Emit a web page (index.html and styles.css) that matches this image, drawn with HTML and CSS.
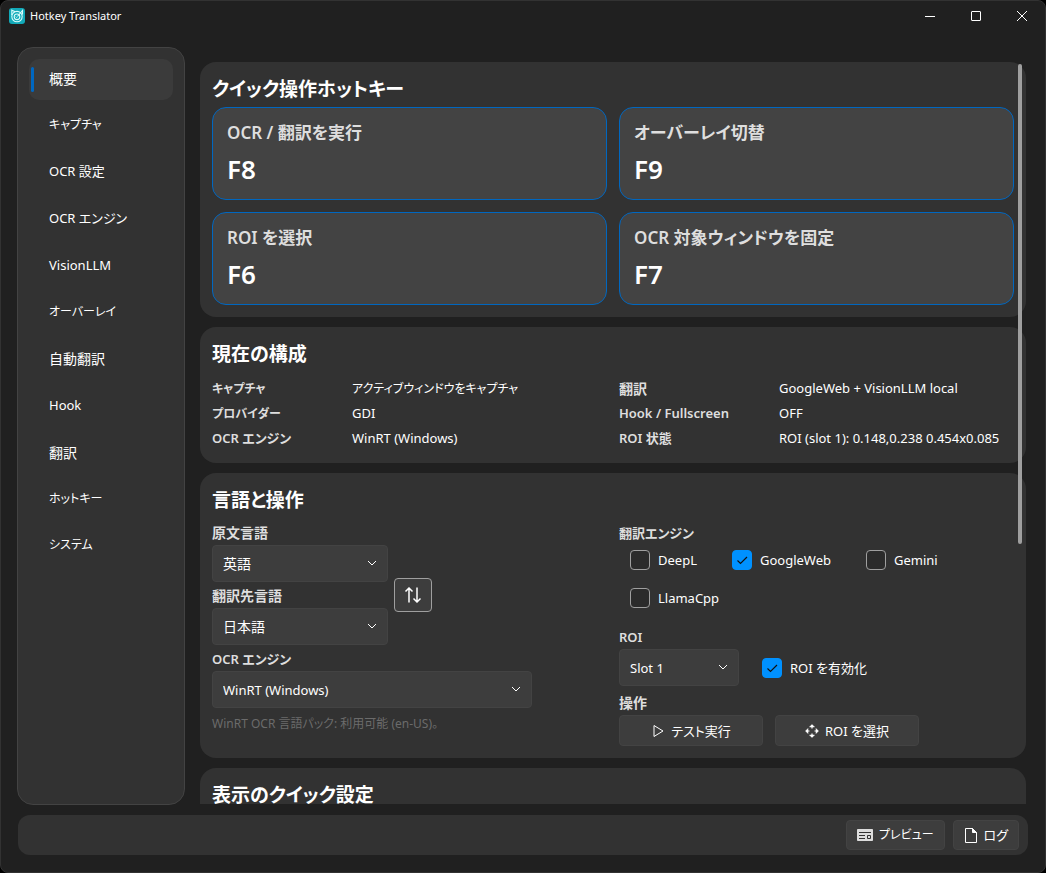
FILE: index.html
```
<!DOCTYPE html>
<html lang="ja">
<head>
    <meta charset="UTF-8">
    <meta name="viewport" content="width=device-width, initial-scale=1.0">
    <title>Hotkey Translator</title>
    <link rel="stylesheet" href="styles.css">
</head>
<body>
    <div class="window">
        <header class="titlebar">
            <svg class="app-icon" viewBox="0 0 16 16" aria-hidden="true">
                <rect width="16" height="16" rx="3" fill="#12a9b8"/>
                <g fill="none" stroke="#d8fbfb" stroke-width="1.1">
                    <circle cx="8" cy="8.6" r="5.2"/>
                    <circle cx="8" cy="8.8" r="2.8"/>
                    <path d="M2.800 7V2.200l3.400 1.600M8.500 8.500l5-6v4"/>
                    <path d="M6.800 8.600l1.200 1.200" stroke-width="1"/>
                </g>
            </svg>
            <span class="app-title">Hotkey Translator</span>
            <div class="window-buttons">
                <button type="button" aria-label="最小化"><svg viewBox="0 0 10 10"><path d="M0 5.5h10"/></svg></button>
                <button type="button" aria-label="最大化"><svg viewBox="0 0 10 10"><rect x="0.5" y="0.5" width="9" height="9" rx="0.5"/></svg></button>
                <button type="button" aria-label="閉じる"><svg viewBox="0 0 10 10"><path d="M0 0l10 10M10 0L0 10"/></svg></button>
            </div>
        </header>

        <div class="main">
            <nav class="sidebar">
                <a class="nav-item kanji active" href="#overview">概要</a>
                <a class="nav-item kana" href="#capture">キャプチャ</a>
                <a class="nav-item" href="#ocr">OCR 設定</a>
                <a class="nav-item" href="#engine">OCR エンジン</a>
                <a class="nav-item" href="#vision">VisionLLM</a>
                <a class="nav-item kana" href="#overlay">オーバーレイ</a>
                <a class="nav-item kanji" href="#auto">自動翻訳</a>
                <a class="nav-item" href="#hook">Hook</a>
                <a class="nav-item kanji" href="#translate">翻訳</a>
                <a class="nav-item kana" href="#hotkeys">ホットキー</a>
                <a class="nav-item kana" href="#system">システム</a>
            </nav>

            <div class="content">
                <div class="scroller">
                    <section class="panel">
                        <h2>クイック操作ホットキー</h2>
                        <div class="hotkeys">
                            <div class="hotkey"><h3>OCR / 翻訳を実行</h3><p>F8</p></div>
                            <div class="hotkey"><h3>オーバーレイ切替</h3><p>F9</p></div>
                            <div class="hotkey"><h3>ROI を選択</h3><p>F6</p></div>
                            <div class="hotkey"><h3>OCR 対象ウィンドウを固定</h3><p>F7</p></div>
                        </div>
                    </section>

                    <section class="panel">
                        <h2>現在の構成</h2>
                        <div class="columns status">
                            <dl>
                                <dt class="kana">キャプチャ</dt><dd class="kana">アクティブウィンドウをキャプチャ</dd>
                                <dt class="kana">プロバイダー</dt><dd>GDI</dd>
                                <dt>OCR エンジン</dt><dd>WinRT (Windows)</dd>
                            </dl>
                            <dl class="wide">
                                <dt class="kanji">翻訳</dt><dd>GoogleWeb + VisionLLM local</dd>
                                <dt>Hook / Fullscreen</dt><dd>OFF</dd>
                                <dt>ROI 状態</dt><dd>ROI (slot 1): 0.148,0.238 0.454x0.085</dd>
                            </dl>
                        </div>
                    </section>

                    <section class="panel">
                        <h2>言語と操作</h2>
                        <div class="columns controls">
                            <div class="column">
                                <div class="languages">
                                    <div class="language-fields">
                                        <div class="field">
                                            <label class="kanji" for="source">原文言語</label>
                                            <div class="select">
                                                <select class="kanji" id="source"><option>英語</option><option>日本語</option></select>
                                                <svg viewBox="0 0 10 6"><path d="M1 1l4 4 4-4"/></svg>
                                            </div>
                                        </div>
                                        <div class="field">
                                            <label class="kanji" for="target">翻訳先言語</label>
                                            <div class="select">
                                                <select class="kanji" id="target"><option>日本語</option><option>英語</option></select>
                                                <svg viewBox="0 0 10 6"><path d="M1 1l4 4 4-4"/></svg>
                                            </div>
                                        </div>
                                    </div>
                                    <button class="swap" type="button" aria-label="言語を入れ替え">
                                        <svg viewBox="0 0 18 16"><path d="M5 15.5V1M1.5 4.5L5 1l3.500 3.500M13 .5V15M9.500 11.500L13 15l3.500-3.500"/></svg>
                                    </button>
                                </div>
                                <div class="field engine">
                                    <label for="ocr-engine">OCR エンジン</label>
                                    <div class="select">
                                        <select id="ocr-engine"><option>WinRT (Windows)</option></select>
                                        <svg viewBox="0 0 10 6"><path d="M1 1l4 4 4-4"/></svg>
                                    </div>
                                </div>
                                <p class="hint">WinRT OCR 言語パック: 利用可能 (en-US)。</p>
                            </div>

                            <div class="column">
                                <fieldset>
                                    <legend>翻訳エンジン</legend>
                                    <div class="checks">
                                        <label class="check"><input type="checkbox">DeepL</label>
                                        <label class="check"><input type="checkbox" checked>GoogleWeb</label>
                                        <label class="check"><input type="checkbox">Gemini</label>
                                        <label class="check"><input type="checkbox">LlamaCpp</label>
                                    </div>
                                </fieldset>
                                <div class="field roi">
                                    <label for="slot">ROI</label>
                                    <div class="roi-row">
                                        <div class="select">
                                            <select id="slot"><option>Slot 1</option><option>Slot 2</option></select>
                                            <svg viewBox="0 0 10 6"><path d="M1 1l4 4 4-4"/></svg>
                                        </div>
                                        <label class="check"><input type="checkbox" checked>ROI を有効化</label>
                                    </div>
                                </div>
                                <div class="field actions">
                                    <span class="label kanji">操作</span>
                                    <div class="action-row">
                                        <button class="button" type="button">
                                            <svg viewBox="0 0 14 14"><path d="M3 1.500v11L12 7z"/></svg>テスト実行
                                        </button>
                                        <button class="button" type="button">
                                            <svg viewBox="0 0 14 14"><path d="M7 1v3.500M7 9.500V13M1 7h3.500M9.500 7H13" stroke-width="1.2"/><path d="M4.500 3L7 .5 9.500 3zM4.500 11L7 13.500 9.500 11zM3 4.500L.5 7 3 9.500zM11 4.500L13.500 7 11 9.500z" fill="#fff" stroke-width="0.5"/></svg>ROI を選択
                                        </button>
                                    </div>
                                </div>
                            </div>
                        </div>
                    </section>

                    <section class="panel">
                        <h2>表示のクイック設定</h2>
                    </section>
                </div>
                <div class="scroll-thumb"></div>
            </div>
        </div>

        <footer class="footer">
            <button class="button kana" type="button">
                <svg class="preview-icon" viewBox="0 0 16 12"><path d="M.5.5h15v11H.5z" fill="#ddd" stroke="#ddd"/><path d="M2 3.500h12M2 6.500h6M2 9.500h6M10.500 6.500h3v3h-3z" stroke="#333"/></svg>プレビュー
            </button>
            <button class="button" type="button">
                <svg class="log-icon" viewBox="0 0 14 15"><path d="M1.500.5h7l4 4v10h-11z"/><path d="M8.500.5v4h4z" fill="#fff"/></svg>ログ
            </button>
        </footer>
    </div>
</body>
</html>
```
FILE: styles.css
```
* {
    box-sizing: border-box;
}

body {
    margin: 0;
    background: #000;
    color: #fff;
    font-family: "Noto Sans", "Noto Sans CJK JP", sans-serif;
    font-size: 13px;
    line-height: 20px;
    font-feature-settings: "palt";
}

h2, h3, p, dl, dd, fieldset {
    margin: 0;
    padding: 0;
}

button, select, input {
    font: inherit;
    font-feature-settings: inherit;
    color: inherit;
    margin: 0;
}

svg {
    flex: none;
    fill: none;
    stroke: currentColor;
}

.kana {
    font-size: 12px;
}

.kanji {
    font-size: 14px;
}

.window {
    display: flex;
    flex-direction: column;
    height: 100vh;
    background: #202020;
    border: 1px solid #323232;
    border-radius: 8px;
    overflow: hidden;
}

/* title bar */
.titlebar {
    display: flex;
    align-items: center;
    height: 30px;
    padding-left: 8px;
    font-size: 11px;
}

.app-icon {
    width: 16px;
    height: 16px;
    stroke: none;
    margin-right: 5px;
}

.window-buttons {
    display: flex;
    margin-left: auto;
}

.window-buttons button {
    display: flex;
    align-items: center;
    justify-content: center;
    width: 46px;
    height: 30px;
    padding: 0;
    background: none;
    border: none;
}

.window-buttons svg {
    width: 10px;
    height: 10px;
}

/* layout */
.main {
    flex: 1;
    display: flex;
    gap: 15px;
    min-height: 0;
    padding: 16px 19px 10px 16px;
}

.sidebar {
    display: flex;
    flex-direction: column;
    gap: 6px;
    width: 168px;
    padding: 11px;
    background: #323232;
    border: 1px solid #434343;
    border-radius: 16px;
}

.nav-item {
    display: flex;
    align-items: center;
    padding: 9px 0 11px 20px;
    line-height: 21px;
    border-radius: 10px;
    color: #fff;
    text-decoration: none;
}

.nav-item.kana {
    line-height: 20px;
}

.nav-item.active {
    position: relative;
    background: #3b3b3b;
}

.nav-item.active::before {
    content: "";
    position: absolute;
    left: 2px;
    top: 8px;
    width: 3px;
    height: 25px;
    border-radius: 2px;
    background: #0067c0;
}

.content {
    flex: 1;
    position: relative;
    min-width: 0;
    padding: 15px 0 1px;
}

.scroller {
    height: 100%;
    overflow-y: auto;
    scrollbar-width: none;
}

.scroll-thumb {
    position: absolute;
    top: 17px;
    right: 4px;
    width: 4px;
    height: 480px;
    border-radius: 2px;
    background: #9f9f9f;
}

.panel {
    padding: 13px 12px 12px;
    margin-bottom: 10px;
    background: #323232;
    border-radius: 16px;
}

h2 {
    font-size: 19px;
    line-height: 28px;
    font-weight: 600;
}

.columns {
    display: grid;
    grid-template-columns: 1fr 1fr;
    gap: 12px;
}

/* hotkey cards */
.hotkeys {
    display: grid;
    grid-template-columns: 1fr 1fr;
    gap: 12px;
    margin-top: 4px;
}

.hotkey {
    padding: 13px 14px 12px;
    background: #434343;
    border: 1px solid #0067c0;
    border-radius: 14px;
}

.hotkey h3 {
    font-size: 17px;
    line-height: 24px;
    font-weight: 600;
    color: #dedede;
}

.hotkey p {
    margin-top: 6px;
    font-size: 26px;
    line-height: 36px;
    font-weight: 600;
}

/* current configuration */
.status {
    margin-top: 8px;
}

.status dl {
    display: grid;
    grid-template-columns: 140px 1fr;
    line-height: 25px;
    white-space: nowrap;
}

.status dl.wide {
    grid-template-columns: 160px 1fr;
}

.status dt {
    font-weight: 600;
    color: #dedede;
}

/* language and operation */
.controls {
    margin-top: 9px;
}

.field > label,
.label,
legend {
    display: block;
    padding: 0;
    height: 22px;
    font-weight: 600;
    color: #dedede;
}

fieldset {
    border: none;
    min-width: 0;
}

.select {
    position: relative;
}

.select select {
    display: block;
    appearance: none;
    width: 100%;
    height: 37px;
    padding: 0 32px 0 10px;
    background: #3d3d3d;
    border: 1px solid #434343;
    border-radius: 4px;
}

.select select.kanji {
    font-size: 14px;
}

.select svg {
    position: absolute;
    top: 15px;
    right: 11px;
    width: 10px;
    height: 6px;
    pointer-events: none;
}

.languages {
    display: flex;
    align-items: center;
    gap: 6px;
}

.language-fields {
    display: grid;
    gap: 4px;
    width: 176px;
}

.swap {
    display: flex;
    align-items: center;
    justify-content: center;
    width: 38px;
    height: 34px;
    margin-top: 22px;
    padding: 0;
    background: #3d3d3d;
    border: 1px solid #9f9f9f;
    border-radius: 4px;
}

.swap svg {
    width: 18px;
    height: 16px;
    stroke-width: 1.5;
}

.engine {
    width: 320px;
    margin-top: 4px;
}

.hint {
    margin-top: 6px;
    font-size: 12px;
    color: #6b6b6b;
}

.checks {
    display: flex;
    flex-wrap: wrap;
    gap: 18px 35px;
    padding: 5px 0 0 11px;
}

.check {
    display: flex;
    align-items: center;
    gap: 8px;
}

.check input {
    appearance: none;
    width: 20px;
    height: 20px;
    border: 1px solid #9f9f9f;
    border-radius: 4px;
    background: #2b2b2b;
}

.check input:checked {
    border-color: #0091ff;
    background: #0091ff url("data:image/svg+xml,%3Csvg xmlns='http://www.w3.org/2000/svg' viewBox='0 0 20 20'%3E%3Cpath d='M5.500 10.500l3 3 6.500-6.500' fill='none' stroke='%23111' stroke-width='1.200'/%3E%3C/svg%3E") center / 20px;
}

.roi {
    margin-top: 19px;
}

.roi-row {
    display: flex;
    align-items: center;
    gap: 23px;
}

.roi-row .select {
    width: 120px;
}

.actions {
    margin-top: 7px;
}

.action-row {
    display: flex;
    gap: 12px;
}

.button {
    display: flex;
    align-items: center;
    justify-content: center;
    gap: 6px;
    height: 31px;
    background: #3d3d3d;
    border: 1px solid #434343;
    border-radius: 4px;
    white-space: nowrap;
}

.button.kana {
    font-size: 12px;
}

.button svg {
    width: 14px;
    height: 14px;
}

.action-row .button {
    width: 144px;
}

/* footer */
.footer {
    display: flex;
    align-items: center;
    justify-content: flex-end;
    gap: 8px;
    height: 40px;
    margin: 0 17px 17px;
    padding: 0 9px;
    background: #323232;
    border-radius: 12px;
}

.footer .button {
    height: 30px;
    padding: 0 10px;
}

.footer .preview-icon {
    width: 16px;
    height: 12px;
}

.footer .log-icon {
    width: 14px;
    height: 15px;
}
```
